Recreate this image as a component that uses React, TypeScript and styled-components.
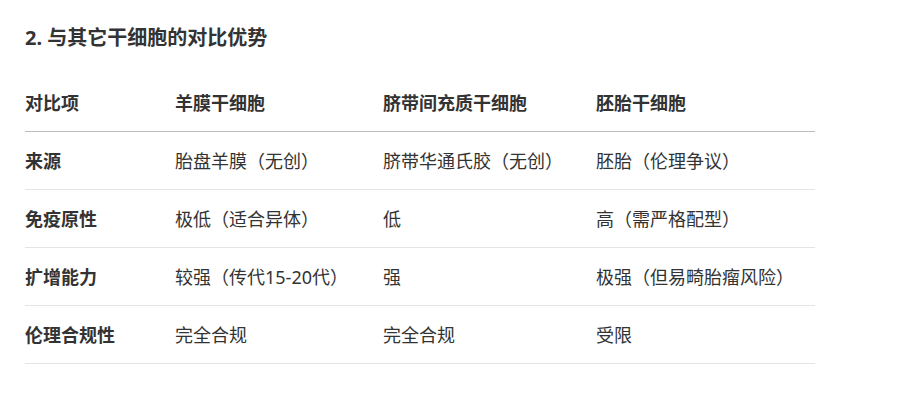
import React from "react";
import styled, { createGlobalStyle } from "styled-components";

const GlobalStyle = createGlobalStyle`
    body {
        margin: 0;
        background: #ffffff;
        font-family: "Noto Sans", "Noto Sans CJK SC", sans-serif;
        color: #333333;
    }
`

const Container = styled.section`
    padding: 24px 25px;
`

const Title = styled.h3`
    margin: 0 0 23px 0;
    font-size: 20px;
    line-height: 28px;
    font-weight: 700;
    color: #333333;
`

const Table = styled.table`
    width: 790px;
    border-collapse: collapse;
    table-layout: fixed;
`

const Th = styled.th`
    text-align: left;
    font-size: 18px;
    line-height: 24px;
    font-weight: 700;
    color: #333333;
    padding: 16px 8px 16px 0;
    border-bottom: 1px solid #bcbcbc;
`

const Td = styled.td<{ $bold?: boolean }>`
    text-align: left;
    font-size: 18px;
    line-height: 24px;
    font-weight: ${({ $bold }) => ($bold ? 700 : 400)};
    color: #333333;
    padding: 17px 8px 16px 0;
    border-bottom: 1px solid #e4e4e4;
    white-space: nowrap;
`

const headers = ["对比项", "羊膜干细胞", "脐带间充质干细胞", "胚胎干细胞"];
const widths = [150, 208, 213, 219];

const rows = [
    ["来源", "胎盘羊膜（无创）", "脐带华通氏胶（无创）", "胚胎（伦理争议）"],
    ["免疫原性", "极低（适合异体）", "低", "高（需严格配型）"],
    ["扩增能力", "较强（传代15-20代）", "强", "极强（但易畸胎瘤风险）"],
    ["伦理合规性", "完全合规", "完全合规", "受限"],
];

export default function App() {
    return (
        <>
            <GlobalStyle />
            <Container>
                <Title>2. 与其它干细胞的对比优势</Title>
                <Table>
                    <colgroup>
                        {widths.map((w, i) => (
                            <col key={i} style={{ width: w }} />
                        ))}
                    </colgroup>
                    <thead>
                        <tr>
                            {headers.map((h) => (
                                <Th key={h}>{h}</Th>
                            ))}
                        </tr>
                    </thead>
                    <tbody>
                        {rows.map((row) => (
                            <tr key={row[0]}>
                                {row.map((cell, i) => (
                                    <Td key={i} $bold={i === 0}>{cell}</Td>
                                ))}
                            </tr>
                        ))}
                    </tbody>
                </Table>
            </Container>
        </>
    )
}
